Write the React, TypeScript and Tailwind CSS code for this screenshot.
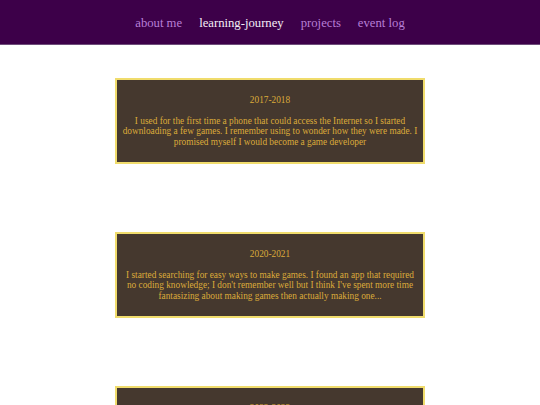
import React from "react";

interface Entry {
  years: string;
  text: string;
}

const entries: Entry[] = [
  {
    years: "2017-2018",
    text: "I used for the first time a phone that could access the Internet so I started downloading a few games. I remember using to wonder how they were made. I promised myself I would become a game developer",
  },
  {
    years: "2020-2021",
    text: "I started searching for easy ways to make games. I found an app that required no coding knowledge; I don't remember well but I think I've spent more time fantasizing about making games then actually making one...",
  },
  {
    years: "2022-2023",
    text: "I finally started learning how to code for real and made my first small games.",
  },
];

const links = [
  { label: "about me", active: false },
  { label: "learning-journey", active: true },
  { label: "projects", active: false },
  { label: "event log", active: false },
];

export default function App() {
  return (
    <div className="min-h-screen bg-white font-['Liberation_Serif',serif]">
      {/* Nav */}
      <header className="h-[45px] bg-[#3d0049] border-b border-[#6e4d7a] flex items-center justify-center gap-[17px] pt-[3px]">
        {links.map((l) => (
          <a
            key={l.label}
            className={`text-[12.7px] leading-none ${
              l.active ? "text-[#f4eef6]" : "text-[#b77fd6]"
            }`}
          >
            {l.label}
          </a>
        ))}
      </header>

      {/* Timeline */}
      <main className="flex flex-col items-center gap-[68px] pt-[33px] pb-10">
        {entries.map((e) => (
          <div
            key={e.years}
            className="w-[310px] border-2 border-[#f0dc6c] bg-[#45382e] px-[5px] pt-[15px] pb-[15px] text-center text-[#dcab3a] text-[9.3px] leading-[10.5px]"
          >
            <p>{e.years}</p>
            <p className="mt-[10px]">{e.text}</p>
          </div>
        ))}
      </main>
    </div>
  );
}
